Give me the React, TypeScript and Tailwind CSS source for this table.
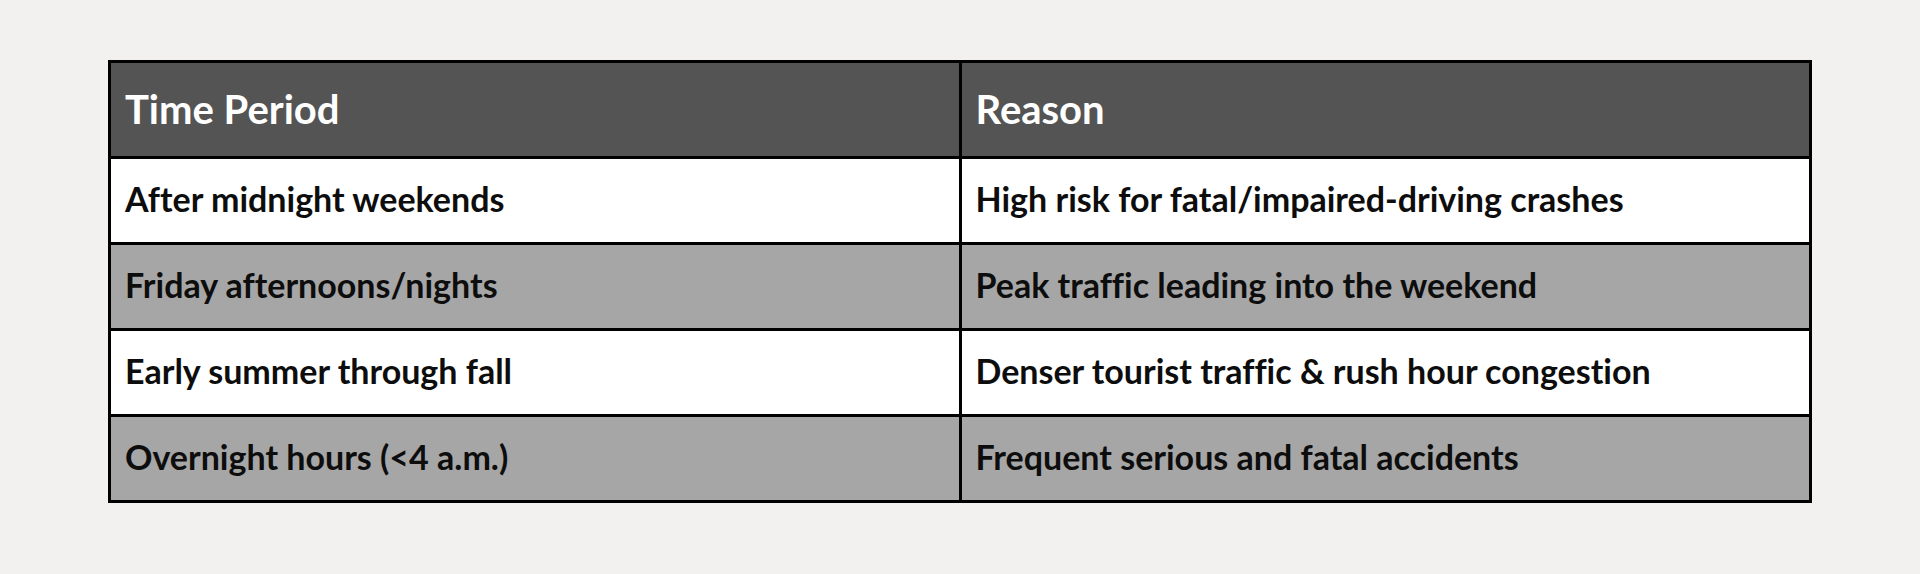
const rows = [
  { period: "After midnight weekends", reason: "High risk for fatal/impaired-driving crashes" },
  { period: "Friday afternoons/nights", reason: "Peak traffic leading into the weekend" },
  { period: "Early summer through fall", reason: "Denser tourist traffic & rush hour congestion" },
  { period: "Overnight hours (<4 a.m.)", reason: "Frequent serious and fatal accidents" },
];

export default function App() {
  return (
    <div className="w-[1920px] h-[574px] bg-[#f2f1ef] pt-[60px] px-[108px] font-['Lato','Liberation_Sans',sans-serif] [font-variant-ligatures:none]">
      <table className="w-full border-collapse border-[3px] border-black table-fixed">
        <thead>
          <tr className="bg-[#545454] h-[96px]">
            <th className="w-1/2 border-[3px] border-black text-left align-middle px-[14px] pb-[2px] text-[40px] font-bold text-white">
              Time Period
            </th>
            <th className="w-1/2 border-[3px] border-black text-left align-middle px-[14px] pb-[2px] text-[40px] font-bold text-white">
              Reason
            </th>
          </tr>
        </thead>
        <tbody>
          {rows.map((row, i) => (
            <tr key={row.period} className={`h-[86px] ${i % 2 === 0 ? "bg-white" : "bg-[#a6a6a6]"}`}>
              <td className="border-[3px] border-black px-[14px] pb-[4px] align-middle text-[34px] font-bold text-[#0d0d0d]">
                {row.period}
              </td>
              <td className="border-[3px] border-black px-[14px] pb-[4px] align-middle text-[34px] font-bold text-[#0d0d0d]">
                {row.reason}
              </td>
            </tr>
          ))}
        </tbody>
      </table>
    </div>
  );
}
